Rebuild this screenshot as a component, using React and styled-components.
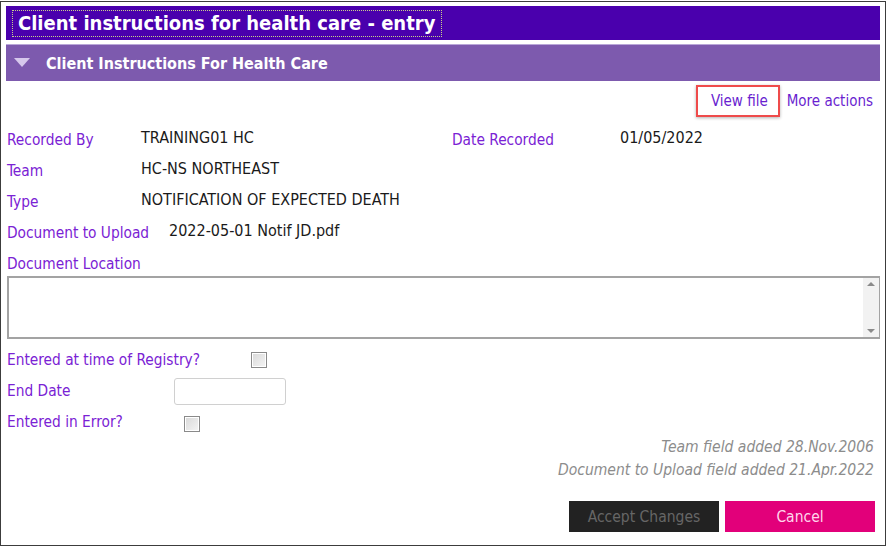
import React from "react";
import styled, { createGlobalStyle } from "styled-components";

const GlobalStyle = createGlobalStyle`
  html, body {
    margin: 0;
    padding: 0;
    background: #ffffff;
  }
  body {
    font-family: "DejaVu Sans Condensed", "DejaVu Sans", sans-serif;
  }
`;

const Frame = styled.div`
  box-sizing: border-box;
  width: 886px;
  height: 545px;
  margin-top: 1px;
  border: 1px solid #3c3c3c;
  padding: 4px 5px 0 5px;
  display: flex;
  flex-direction: column;
`;

const TitleBar = styled.div`
  height: 34px;
  background: #4a00ad;
  display: flex;
  align-items: center;
  padding-left: 7px;
`;

const Title = styled.h1`
  margin: 0;
  font-size: 20px;
  font-weight: bold;
  color: #ffffff;
  padding: 0 6px 0 5px;
  line-height: 25px;
  outline: 1px dotted #c8d08a;
`;

const SectionHeader = styled.div`
  margin-top: 4px;
  height: 37px;
  background: #7d5aae;
  border-top: 1px solid #b9a6d8;
  box-sizing: border-box;
  display: flex;
  align-items: center;
  padding-left: 7px;
  gap: 15px;
`;

const SectionTitle = styled.span`
  color: #ffffff;
  font-size: 16px;
  font-weight: bold;
`;

const Actions = styled.div`
  display: flex;
  justify-content: flex-end;
  align-items: center;
  gap: 7px;
  padding-right: 7px;
  margin-top: 4px;
  height: 31px;
`;

const ActionLink = styled.a`
  color: #6a1fd0;
  font-size: 15px;
  text-decoration: none;
  padding: 5px 10px 5px 13px;
  border: 2px solid ${(p) => (p.$boxed ? "#ef4b4b" : "transparent")};
  box-shadow: ${(p) => (p.$boxed ? "0 1px 3px rgba(0,0,0,0.3)" : "none")};
  ${(p) => !p.$boxed && "padding-left: 0; padding-right: 0; border: none;"}
`;

const Fields = styled.div`
  display: flex;
  flex-direction: column;
  padding-left: 1px;
  margin-top: 12px;
`;

const Row = styled.div`
  display: flex;
  align-items: flex-start;
  height: ${(p) => p.$h || 31}px;
  margin-top: ${(p) => p.$mt || 0}px;
`;

const Label = styled.span`
  color: #7a22d4;
  font-size: 15.3px;
  width: ${(p) => p.$w || 134}px;
  flex-shrink: 0;
  padding-top: 3px;
  white-space: nowrap;
`;

const Value = styled.span`
  color: #1a1a1a;
  font-size: 16px;
  white-space: nowrap;
  width: ${(p) => (p.$w ? p.$w + "px" : "auto")};
`;

const TextAreaBox = styled.div`
  box-sizing: border-box;
  height: 63px;
  border: 2px solid #a3a3a3;
  border-right-width: 1px;
  display: flex;
  justify-content: flex-end;
  margin-top: 1px;
`;

const Scrollbar = styled.div`
  width: 16px;
  background: #f2f2f2;
  display: flex;
  flex-direction: column;
  justify-content: space-between;
  align-items: center;
  padding: 4px 0;
`;

const Arrow = styled.span`
  width: 0;
  height: 0;
  border-left: 4px solid transparent;
  border-right: 4px solid transparent;
  ${(p) =>
    p.$up ? "border-bottom: 4px solid #8a8a8a;" : "border-top: 4px solid #8a8a8a;"}
`;

const Checkbox = styled.span`
  display: inline-block;
  box-sizing: border-box;
  width: 16px;
  height: 16px;
  border: 1px solid #8a8a8a;
  background: linear-gradient(135deg, #d8d8d8, #f5f5f5);
  box-shadow: inset 0 0 0 1px #ffffff;
  margin-top: ${(p) => p.$mt || 5}px;
`;

const DateInput = styled.span`
  display: inline-block;
  box-sizing: border-box;
  width: 112px;
  height: 27px;
  border: 1px solid #d0d0d0;
  border-radius: 3px;
  margin-top: -1px;
`;

const Notes = styled.div`
  display: flex;
  flex-direction: column;
  align-items: flex-end;
  gap: 5px;
  padding-right: 6px;
  margin-top: -3px;
`;

const Note = styled.span`
  color: #8c8c8c;
  font-size: 15.5px;
  font-style: italic;
`;

const ButtonBar = styled.div`
  display: flex;
  justify-content: flex-end;
  gap: 6px;
  padding-right: 5px;
  margin-top: 22px;
`;

const Button = styled.button`
  width: 150px;
  height: 31px;
  border: none;
  font-family: inherit;
  font-size: 15.5px;
  background: ${(p) => (p.$primary ? "#e2007a" : "#222222")};
  color: ${(p) => (p.$primary ? "#ffd6ec" : "#666666")};
`;

export default function App() {
  return (
    <>
      <GlobalStyle />
      <Frame>
        <TitleBar>
          <Title>Client instructions for health care - entry</Title>
        </TitleBar>
        <SectionHeader>
          <svg width="18" height="12" viewBox="0 0 18 12">
            <polygon points="1,1 17,1 9,10" fill="#d6c8ec" />
          </svg>
          <SectionTitle>Client Instructions For Health Care</SectionTitle>
        </SectionHeader>
        <Actions>
          <ActionLink $boxed>View file</ActionLink>
          <ActionLink>More actions</ActionLink>
        </Actions>
        <Fields>
          <Row>
            <Label>Recorded By</Label>
            <Value $w={311}>TRAINING01 HC</Value>
            <Label $w={168}>Date Recorded</Label>
            <Value>01/05/2022</Value>
          </Row>
          <Row>
            <Label>Team</Label>
            <Value>HC-NS NORTHEAST</Value>
          </Row>
          <Row>
            <Label>Type</Label>
            <Value>NOTIFICATION OF EXPECTED DEATH</Value>
          </Row>
          <Row>
            <Label $w={162}>Document to Upload</Label>
            <Value>2022-05-01 Notif JD.pdf</Value>
          </Row>
          <Row $h={23}>
            <Label>Document Location</Label>
          </Row>
          <TextAreaBox>
            <Scrollbar>
              <Arrow $up />
              <Arrow />
            </Scrollbar>
          </TextAreaBox>
          <Row $mt={9}>
            <Label $w={244}>Entered at time of Registry?</Label>
            <Checkbox $mt={4} />
          </Row>
          <Row>
            <Label $w={167}>End Date</Label>
            <DateInput />
          </Row>
          <Row>
            <Label $w={177}>Entered in Error?</Label>
            <Checkbox $mt={6} />
          </Row>
        </Fields>
        <Notes>
          <Note>Team field added 28.Nov.2006</Note>
          <Note>Document to Upload field added 21.Apr.2022</Note>
        </Notes>
        <ButtonBar>
          <Button>Accept Changes</Button>
          <Button $primary>Cancel</Button>
        </ButtonBar>
      </Frame>
    </>
  );
}
